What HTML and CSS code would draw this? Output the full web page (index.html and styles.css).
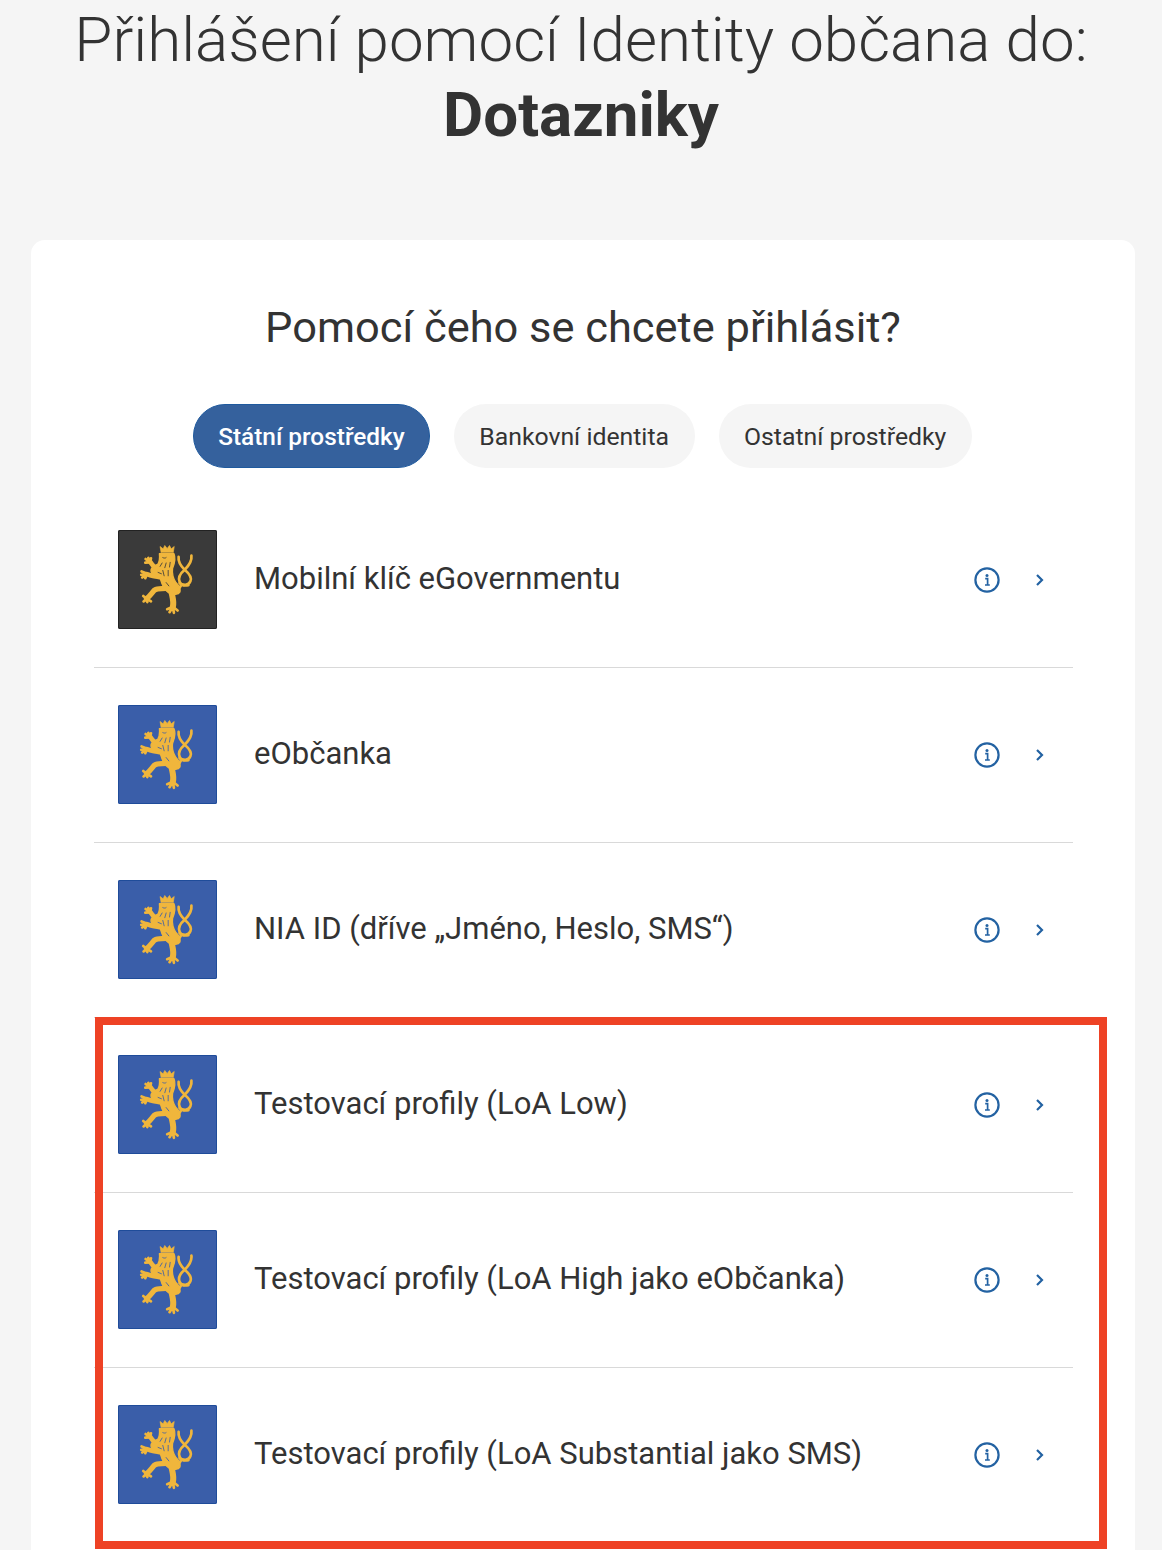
FILE: index.html
```html
<!DOCTYPE html>
<html lang="cs">
<head>
  <meta charset="UTF-8">
  <title>Přihlášení pomocí Identity občana</title>
  <link rel="stylesheet" href="styles.css">
</head>
<body>

  <svg class="defs" width="0" height="0">
    <symbol id="lion" viewBox="27 30 294 294">
      <g fill="#f0b63c" stroke="#f0b63c" stroke-linecap="round" stroke-linejoin="round">
        <!-- crown -->
        <path stroke-width="2" d="M155 97l-3-18 9 7 5-10 7 9 7-9 5 10 9-7-3 18z"/>
        <!-- head and body -->
        <path stroke-width="4" d="M150 100h43c6 14 2 30-4 44-2 16 2 30 10 42 8 8 14 18 12 28-4 8-20 10-34 2-14-8-20-26-24-40-12-2-26-10-28-24 0-12 12-18 20-20 6-10 6-22 5-32z"/>
        <!-- front legs -->
        <path fill="none" stroke-width="14" d="M150 146c-12 0-20-10-27-21"/>
        <path fill="none" stroke-width="13" d="M150 168c-12 2-24-2-37-7"/>
        <!-- hind legs -->
        <path fill="none" stroke-width="16" d="M176 202c-14 4-30 0-40 6-8 8-14 18-24 26"/>
        <path fill="none" stroke-width="18" d="M186 214c2 14 8 28 4 44"/>
        <!-- paws -->
        <path fill="none" stroke-width="8" d="M122 126l-13-10M122 126l-5-13M122 126l-14 1M122 126l3-12"/>
        <path fill="none" stroke-width="8" d="M114 160l-17-7M114 160l-18 3M114 160l-15 11M114 160l-6 13"/>
        <path fill="none" stroke-width="8" d="M112 234l-10-8M112 234l-9 8M112 234l2 10M112 234l13 8"/>
        <path fill="none" stroke-width="8" d="M190 258l-17 7M190 258l-10 16M190 258l3 18M190 258l14 11"/>
        <!-- tail, open figure of eight -->
        <path fill="none" stroke-width="8" d="M204 212c4-8 8-14 12-20"/>
        <path fill="none" stroke-width="8" d="M207 110c-2 14 6 26 18 38 12 10 22 22 17 34-5 12-22 14-32 6"/>
        <path fill="none" stroke-width="8" d="M245 106c2 14-8 30-20 42-12 10-20 24-15 36 4 10 14 12 26 10"/>
      </g>
      <!-- mane and body lines in the tile colour -->
      <g fill="none" stroke="currentColor" stroke-width="2.5" stroke-linecap="round">
        <path d="M160 112c4 2 8 2 10 0M158 128l-6 10M170 128l-4 14M182 126l-2 14M146 156l10 4M160 150l4 16M176 150l0 16M170 186l8 10"/>
      </g>
    </symbol>
    <symbol id="info" viewBox="0 0 26 26">
      <circle cx="13" cy="13" r="11.6" fill="none" stroke="#2362a2" stroke-width="2.2"/>
      <circle cx="13" cy="8.4" r="1.5" fill="#2362a2"/>
      <path d="M11.2 11.6h2.4v6.2M11 18h4.8" fill="none" stroke="#2362a2" stroke-width="1.7"/>
    </symbol>
    <symbol id="chevron" viewBox="0 0 10 14">
      <path d="M2 2l5 5-5 5" fill="none" stroke="#2362a2" stroke-width="2.2"/>
    </symbol>
  </svg>

  <header class="page-head">
    <h1>Přihlášení pomocí Identity občana do:<br><strong>Dotazniky</strong></h1>
  </header>

  <main class="card">
    <h2>Pomocí čeho se chcete přihlásit?</h2>

    <div class="tabs">
      <button class="tab active">Státní prostředky</button>
      <button class="tab">Bankovní identita</button>
      <button class="tab">Ostatní prostředky</button>
    </div>

    <div class="methods">
      <div class="method">
        <div class="logo dark"><svg><use href="#lion"/></svg></div>
        <span class="name">Mobilní klíč eGovernmentu</span>
        <svg class="info"><use href="#info"/></svg>
        <svg class="chevron"><use href="#chevron"/></svg>
      </div>
      <div class="method">
        <div class="logo"><svg><use href="#lion"/></svg></div>
        <span class="name">eObčanka</span>
        <svg class="info"><use href="#info"/></svg>
        <svg class="chevron"><use href="#chevron"/></svg>
      </div>
      <div class="method">
        <div class="logo"><svg><use href="#lion"/></svg></div>
        <span class="name">NIA ID (dříve „Jméno, Heslo, SMS“)</span>
        <svg class="info"><use href="#info"/></svg>
        <svg class="chevron"><use href="#chevron"/></svg>
      </div>
      <div class="method">
        <div class="logo"><svg><use href="#lion"/></svg></div>
        <span class="name">Testovací profily (LoA Low)</span>
        <svg class="info"><use href="#info"/></svg>
        <svg class="chevron"><use href="#chevron"/></svg>
      </div>
      <div class="method">
        <div class="logo"><svg><use href="#lion"/></svg></div>
        <span class="name">Testovací profily (LoA High jako eObčanka)</span>
        <svg class="info"><use href="#info"/></svg>
        <svg class="chevron"><use href="#chevron"/></svg>
      </div>
      <div class="method">
        <div class="logo"><svg><use href="#lion"/></svg></div>
        <span class="name">Testovací profily (LoA Substantial jako SMS)</span>
        <svg class="info"><use href="#info"/></svg>
        <svg class="chevron"><use href="#chevron"/></svg>
      </div>
      <div class="highlight"></div>
    </div>
  </main>

</body>
</html>
```

FILE: styles.css
```css
html, body {
  height: 1550px;
  overflow: hidden;
}
body {
  margin: 0;
  background: #f5f5f5;
  font-family: Roboto, Arial, sans-serif;
  color: #333;
}
.defs {
  display: block;
  height: 0;
}
.page-head {
  height: 240px;
  text-align: center;
}
h1 {
  margin: 0;
  padding-top: 3px;
  font-size: 61.9px;
  font-weight: 300;
  line-height: 75px;
}
h1 strong {
  font-weight: 700;
}
.card {
  margin: 0 27px 0 31px;
  padding-top: 60px;
  height: 1250px;
  background: white;
  border-radius: 14px 14px 0 0;
}
h2 {
  margin: 0;
  text-align: center;
  font-size: 43.4px;
  font-weight: 400;
  line-height: 56px;
}
.tabs {
  display: flex;
  justify-content: center;
  gap: 24px;
  margin-top: 48px;
  margin-bottom: 25px;
  padding-right: 1px;
}
.tab {
  height: 64px;
  padding: 0 25.5px;
  border: none;
  border-radius: 32px;
  background: #f5f5f5;
  color: #333;
  font-family: Roboto, Arial, sans-serif;
  font-size: 24.8px;
}
.tab.active {
  padding: 0 24px;
  background: #35619d;
  border: 1px solid #1f5a9e;
  color: white;
  font-weight: 500;
  font-size: 24.4px;
}
.methods {
  position: relative;
  margin: 0 62px 0 63px;
}
.method {
  display: flex;
  align-items: center;
  box-sizing: border-box;
  height: 175px;
  padding: 0 24px 1px;
  border-bottom: 1px solid #d9d9d9;
  color: #333;
}
.method:nth-child(6) {
  border-bottom-color: transparent;
}
.logo {
  flex: none;
  width: 99px;
  height: 99px;
  border-radius: 2px;
  background: #3a5ea9;
  box-shadow: inset 0 0 0 1px #1f4c9a;
  color: #3a5ea9;
}
.logo.dark {
  background: #3a3a3a;
  box-shadow: inset 0 0 0 1px #222;
  color: #3a3a3a;
}
.logo svg {
  display: block;
  width: 99px;
  height: 99px;
}
.name {
  flex: 1;
  margin: 0 0 3px 37px;
  font-size: 31px;
}
.info {
  width: 26px;
  height: 26px;
}
.chevron {
  width: 10px;
  height: 14px;
  margin: 0 4px 0 35px;
}
/* red annotation box over the last three rows */
.highlight {
  position: absolute;
  left: 1px;
  top: 524px;
  width: 1012px;
  height: 532px;
  box-sizing: border-box;
  border: 8px solid #ee4225;
}
```
